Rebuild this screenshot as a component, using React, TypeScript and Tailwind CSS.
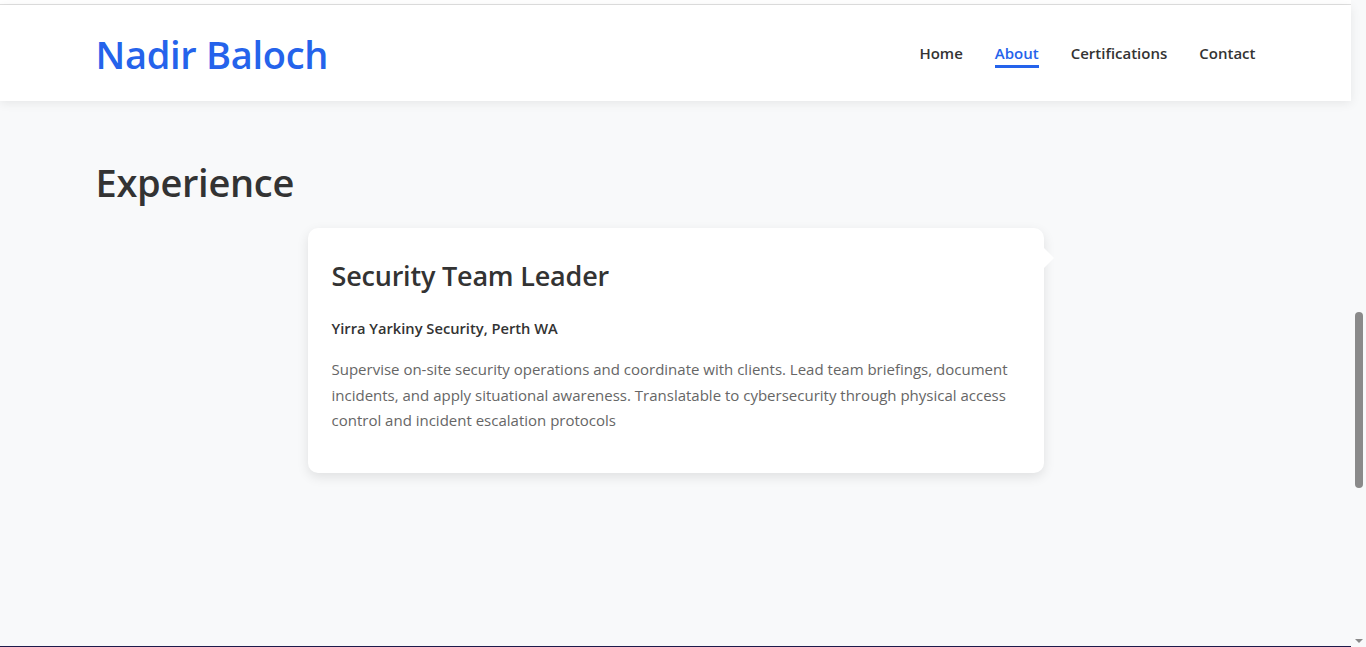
export default function App() {
  const links = ['Home', 'About', 'Certifications', 'Contact'];

  return (
    <div className="h-[647px] w-[1366px] overflow-hidden flex bg-[#f8f9fa] font-['Open_Sans',sans-serif] text-[#333]">
      <div className="flex-1 flex flex-col">
        <div className="h-[4px] bg-white" />
        <div className="h-[1px] bg-[#e0e0e0]" />
        <header className="h-[96px] bg-white shadow-[0_2px_10px_rgba(0,0,0,0.08)] relative z-10">
          <div className="w-[1160px] mx-auto h-full flex items-center justify-between">
            <h1 className="text-[38px] font-semibold text-[#2563eb] tracking-[-0.3px] pt-[2px]">Nadir Baloch</h1>
            <nav className="flex gap-8 pt-[4px]">
              {links.map((l) => (
                <a
                  key={l}
                  className={
                    l === 'About'
                      ? 'text-[15px] font-semibold leading-[22px] text-[#2563eb] border-b-[3px] border-[#2563eb] pb-[1px]'
                      : 'text-[15px] font-semibold leading-[22px] text-[#333] border-b-[3px] border-transparent pb-[1px]'
                  }>
                  {l}
                </a>
              ))}
            </nav>
          </div>
        </header>

        <main className="flex-1 flex flex-col">
          <div className="w-[1160px] mx-auto pt-[55px]">
            <h2 className="text-[38px] font-semibold leading-[52px] tracking-[-0.3px]">Experience</h2>
          </div>
          <div className="w-[736px] mx-auto mt-[20px] relative">
            <div className="bg-white rounded-[10px] shadow-[0_4px_12px_rgba(0,0,0,0.1)] px-6 pt-[28px] pb-[39px]">
              <h3 className="text-[27px] font-semibold leading-[40px] tracking-[-0.2px]">Security Team Leader</h3>
              <p className="mt-[20px] text-[14.7px] font-semibold leading-[24px]">Yirra Yarkiny Security, Perth WA</p>
              <p className="mt-[17px] text-[15px] leading-[25.6px] text-[#666]">
                Supervise on-site security operations and coordinate with clients. Lead team briefings, document
                incidents, and apply situational awareness. Translatable to cybersecurity through physical access
                control and incident escalation protocols
              </p>
            </div>
            <div className="absolute right-[-10px] top-[20px] w-0 h-0 border-y-[10px] border-y-transparent border-l-[10px] border-l-white" />
          </div>
        </main>
        <div className="h-[1px] bg-[#1e1b4b]" />
      </div>

      <div className="w-[15px] bg-[#f8f9fa] flex flex-col items-center">
        <div className="h-[312px]" />
        <div className="w-[8px] h-[176px] rounded-full bg-[#8a8a8a]" />
        <div className="flex-1" />
        <div className="mb-[4px] w-0 h-0 border-x-[4px] border-x-transparent border-t-[4px] border-t-[#8a8a8a]" />
      </div>
    </div>
  );
}
